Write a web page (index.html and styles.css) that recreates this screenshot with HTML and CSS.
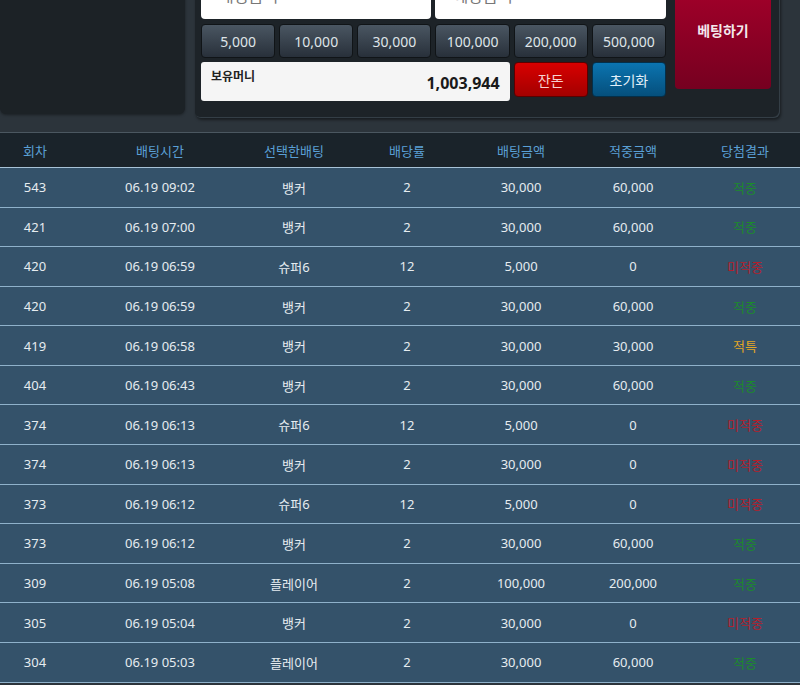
FILE: index.html
```html
<!DOCTYPE html>
<html lang="ko">
<head>
    <meta charset="UTF-8">
    <meta name="viewport" content="width=device-width, initial-scale=1.0">
    <title>배팅내역</title>
    <link rel="stylesheet" href="styles.css">
</head>
<body>
    <div class="betArea">
        <div class="sidePanel"></div>

        <div class="betPanel">
            <div class="amountBox">배팅금액</div>
            <div class="amountBox">예상금액</div>

            <button class="betButton">베팅하기</button>

            <button class="chipButton">5,000</button>
            <button class="chipButton">10,000</button>
            <button class="chipButton">30,000</button>
            <button class="chipButton">100,000</button>
            <button class="chipButton">200,000</button>
            <button class="chipButton">500,000</button>

            <div class="moneyBox">
                <span class="moneyLabel">보유머니</span>
                <span class="moneyValue">1,003,944</span>
            </div>
            <button class="changeButton">잔돈</button>
            <button class="resetButton">초기화</button>
        </div>
    </div>

    <table class="historyTable">
        <thead>
            <tr>
                <th>회차</th>
                <th>배팅시간</th>
                <th>선택한배팅</th>
                <th>배당률</th>
                <th>배팅금액</th>
                <th>적중금액</th>
                <th>당첨결과</th>
            </tr>
        </thead>
        <tbody>
            <tr><td>543</td><td>06.19 09:02</td><td>뱅커</td><td>2</td><td>30,000</td><td>60,000</td><td class="win">적중</td></tr>
            <tr><td>421</td><td>06.19 07:00</td><td>뱅커</td><td>2</td><td>30,000</td><td>60,000</td><td class="win">적중</td></tr>
            <tr><td>420</td><td>06.19 06:59</td><td>슈퍼6</td><td>12</td><td>5,000</td><td>0</td><td class="lose">미적중</td></tr>
            <tr><td>420</td><td>06.19 06:59</td><td>뱅커</td><td>2</td><td>30,000</td><td>60,000</td><td class="win">적중</td></tr>
            <tr><td>419</td><td>06.19 06:58</td><td>뱅커</td><td>2</td><td>30,000</td><td>30,000</td><td class="tie">적특</td></tr>
            <tr><td>404</td><td>06.19 06:43</td><td>뱅커</td><td>2</td><td>30,000</td><td>60,000</td><td class="win">적중</td></tr>
            <tr><td>374</td><td>06.19 06:13</td><td>슈퍼6</td><td>12</td><td>5,000</td><td>0</td><td class="lose">미적중</td></tr>
            <tr><td>374</td><td>06.19 06:13</td><td>뱅커</td><td>2</td><td>30,000</td><td>0</td><td class="lose">미적중</td></tr>
            <tr><td>373</td><td>06.19 06:12</td><td>슈퍼6</td><td>12</td><td>5,000</td><td>0</td><td class="lose">미적중</td></tr>
            <tr><td>373</td><td>06.19 06:12</td><td>뱅커</td><td>2</td><td>30,000</td><td>60,000</td><td class="win">적중</td></tr>
            <tr><td>309</td><td>06.19 05:08</td><td>플레이어</td><td>2</td><td>100,000</td><td>200,000</td><td class="win">적중</td></tr>
            <tr><td>305</td><td>06.19 05:04</td><td>뱅커</td><td>2</td><td>30,000</td><td>0</td><td class="lose">미적중</td></tr>
            <tr><td>304</td><td>06.19 05:03</td><td>플레이어</td><td>2</td><td>30,000</td><td>60,000</td><td class="win">적중</td></tr>
        </tbody>
    </table>
</body>
</html>
```

FILE: styles.css
```css
body {
    margin: 0;
    background-color: #2c343b;
    color: #e6ecf0;
    font-family: "Noto Sans", "Noto Sans CJK KR", sans-serif;
    font-size: 13px;
    overflow: hidden;
}

button {
    font-family: inherit;
    cursor: pointer;
}

/* 상단 배팅 영역 (스크롤된 상태) */
.betArea {
    display: flex;
    gap: 10px;
    margin-top: -35px;
    padding: 0 20px 14px 0;
    border-bottom: 1px solid #4b5760;
}

.sidePanel {
    width: 185px;
    margin-bottom: 4px;
    background-color: #1c2226;
    border-radius: 0 0 6px 6px;
    box-shadow: 0 1px 3px rgba(0, 0, 0, 0.4);
}

.betPanel {
    flex: 1;
    display: grid;
    grid-template-columns: repeat(6, 1fr) 101px;
    grid-template-rows: 49px 34px 39px;
    column-gap: 4px;
    row-gap: 4px;
    padding: 6px 9px 17px 6px;
    background-color: #1d2328;
    border-radius: 6px;
    box-shadow: 1px 2px 3px rgba(0, 0, 0, 0.45), inset -1px -1px 0 #343e46;
}

.amountBox {
    grid-column: span 3;
    margin-bottom: 1px;
    padding: 0 18px;
    background-color: #fff;
    border-radius: 4px;
    color: #777;
    font-size: 16px;
    line-height: 50px;
}

.betButton {
    grid-column: 7;
    grid-row: 1 / 4;
    height: 118px;
    margin-left: 5px;
    padding: 0;
    border: none;
    border-radius: 4px;
    background: linear-gradient(#a9002b, #760020);
    color: #f4e8ec;
    font-size: 14px;
    font-weight: 700;
}

.chipButton {
    padding: 0;
    border: 1px solid #101417;
    border-radius: 4px;
    background: linear-gradient(#4a5662, #28303a);
    color: #dfe4e8;
    font-size: 14px;
}

.moneyBox {
    grid-column: span 4;
    display: flex;
    justify-content: space-between;
    align-items: center;
    padding: 0 10px;
    background-color: #f5f5f5;
    border-radius: 3px;
}

.moneyLabel {
    align-self: flex-start;
    padding-top: 5px;
    color: #222;
    font-size: 12px;
    font-weight: 700;
}

.moneyValue {
    color: #1a1a1a;
    font-size: 16px;
    font-weight: 700;
    padding-top: 2px;
}

.changeButton, .resetButton {
    height: 35px;
    padding: 0;
    border-radius: 4px;
    font-size: 14px;
}

.changeButton {
    border: 1px solid #5a0000;
    background: linear-gradient(#d80000, #a30000);
    color: #f6d2d2;
}

.resetButton {
    border: 1px solid #032f4a;
    background: linear-gradient(#0b74b0, #054f7c);
    color: #e2f0fa;
}

/* 배팅 내역 */
.historyTable {
    width: 100%;
    table-layout: fixed;
    border-collapse: separate;
    border-spacing: 0;
}

.historyTable th {
    height: 35px;
    box-sizing: border-box;
    padding: 0;
    background-color: #1a232a;
    border-bottom: 1px solid #a7c3d8;
    color: #5aa0d6;
    font-size: 13px;
    font-weight: 400;
}

.historyTable td {
    height: 39.58px;
    box-sizing: border-box;
    padding: 0;
    background-color: #34526a;
    border-bottom: 1px solid #8fb1ca;
    text-align: center;
}

.historyTable th:nth-child(1) { width: 70px; }
.historyTable th:nth-child(2) { width: 180px; }
.historyTable th:nth-child(3) { width: 88px; }
.historyTable th:nth-child(4) { width: 138px; }
.historyTable th:nth-child(5) { width: 90px; }
.historyTable th:nth-child(6) { width: 134px; }

.historyTable th:last-child, .historyTable td:last-child {
    padding-right: 10px;
}

.win {
    color: #1c8a2c;
}

.lose {
    color: #b3202c;
}

.tie {
    color: #e3a625;
}
```
